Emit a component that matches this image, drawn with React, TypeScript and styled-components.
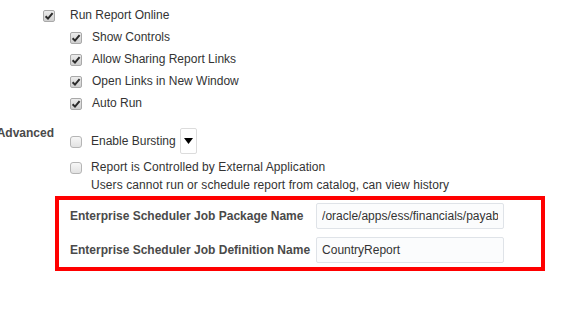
import styled, { createGlobalStyle } from 'styled-components';

const GlobalStyle = createGlobalStyle`
  body {
    margin: 0;
    background: #ffffff;
    font-family: 'Liberation Sans', Arial, sans-serif;
    font-size: 12px;
    color: #333333;
  }
`;

interface CheckProps {
  checked?: boolean;
}
const Check = ({ checked }: CheckProps) => (
  <CheckBox $checked={checked}>
    {checked && (
      <svg width="10" height="10" viewBox="0 0 10 10">
        <path d="M1.6 5.2 L4 7.6 L8.6 2.2" fill="none" stroke="#2b2b2b" strokeWidth="2" />
      </svg>
    )}
  </CheckBox>
);

interface OptionProps {
  label: string;
  checked?: boolean;
  gap?: number;
}
const Option = ({ label, checked, gap = 10 }: OptionProps) => (
  <OptionRow $gap={gap}>
    <Check checked={checked} />
    <span>{label}</span>
  </OptionRow>
);

const App = () => {
  return (
    <Page>
      <GlobalStyle />
      <TopSection>
        <Option label="Run Report Online" checked gap={15} />
        <SubList>
          <Option label="Show Controls" checked />
          <Option label="Allow Sharing Report Links" checked />
          <Option label="Open Links in New Window" checked />
          <Option label="Auto Run" checked />
        </SubList>
      </TopSection>

      <AdvancedSection>
        <SectionLabel>Advanced</SectionLabel>
        <AdvancedList>
          <BurstRow>
            <Check />
            <span className="burst_text">Enable Bursting</span>
            <DropButton>
              <svg width="9" height="6" viewBox="0 0 9 6">
                <path d="M0 0 L9 0 L4.5 6 Z" fill="#000" />
              </svg>
            </DropButton>
          </BurstRow>
          <ExternalRow>
            <Check />
            <div>
              <div>Report is Controlled by External Application</div>
              <div>Users cannot run or schedule report from catalog, can view history</div>
            </div>
          </ExternalRow>
        </AdvancedList>
      </AdvancedSection>

      <HighlightBox>
        <FieldLabel>Enterprise Scheduler Job Package Name</FieldLabel>
        <FieldInput readOnly defaultValue="/oracle/apps/ess/financials/payables/invoices" />
        <FieldLabel>Enterprise Scheduler Job Definition Name</FieldLabel>
        <FieldInput readOnly defaultValue="CountryReport" />
      </HighlightBox>
    </Page>
  );
};

export default App;

const Page = styled.div`
  width: 584px;
  height: 321px;
  overflow: hidden;
  padding-top: 4px;
  box-sizing: border-box;
`;

const TopSection = styled.div`
  padding-left: 43px;
`;

const SubList = styled.div`
  padding-left: 27px;
`;

const OptionRow = styled.div<{ $gap: number }>`
  display: flex;
  align-items: center;
  gap: ${({ $gap }) => $gap}px;
  height: 22px;
  line-height: 14px;
`;

const CheckBox = styled.span<{ $checked?: boolean }>`
  flex: none;
  display: inline-flex;
  align-items: center;
  justify-content: center;
  width: 12px;
  height: 12px;
  box-sizing: border-box;
  border: 1px solid ${({ $checked }) => ($checked ? '#a9a9a9' : '#b5b5b5')};
  border-radius: ${({ $checked }) => ($checked ? '2px' : '3px')};
  background: ${({ $checked }) =>
    $checked
      ? 'linear-gradient(#ececec, #cfcfcf)'
      : 'linear-gradient(#f7f7f7, #e2e2e2)'};
  margin-top: 2px;
`;

const AdvancedSection = styled.div`
  display: grid;
  grid-template-columns: 54px 1fr;
  column-gap: 16px;
  margin-top: 12px;
`;

const SectionLabel = styled.div`
  display: flex;
  justify-content: flex-end;
  white-space: nowrap;
  font-weight: bold;
  color: #4a4a4a;
  line-height: 14px;
`;

const AdvancedList = styled.div`
  display: flex;
  flex-direction: column;
  gap: 4px;
  padding-top: 2px;
`;

const BurstRow = styled.div`
  display: flex;
  align-items: center;
  height: 26px;
  .burst_text {
    margin-left: 9px;
  }
`;

const DropButton = styled.span`
  display: inline-flex;
  align-items: center;
  justify-content: center;
  width: 17px;
  height: 26px;
  box-sizing: border-box;
  margin-left: 4px;
  border: 1px solid #dcdcdc;
  border-radius: 2px;
  background: #ffffff;
`;

const ExternalRow = styled.div`
  display: flex;
  align-items: flex-start;
  gap: 9px;
  line-height: 18px;
  letter-spacing: 0.08px;
  ${CheckBox} {
    margin-top: 4px;
  }
`;

const HighlightBox = styled.div`
  display: grid;
  grid-template-columns: max-content 188px;
  column-gap: 6px;
  row-gap: 8px;
  align-items: center;
  width: 490px;
  box-sizing: border-box;
  margin: 2px 0 0 55px;
  padding: 3px 0 4px 11px;
  border: 4px solid #ff0000;
`;

const FieldLabel = styled.label`
  font-weight: bold;
  color: #4a4a4a;
  white-space: nowrap;
`;

const FieldInput = styled.input`
  width: 188px;
  height: 26px;
  box-sizing: border-box;
  padding: 0 5px;
  border: 1px solid #dfe3e8;
  border-radius: 2px;
  background: #fbfcfd;
  font-family: 'Liberation Sans', Arial, sans-serif;
  font-size: 12px;
  color: #333333;
  outline: none;
`;
